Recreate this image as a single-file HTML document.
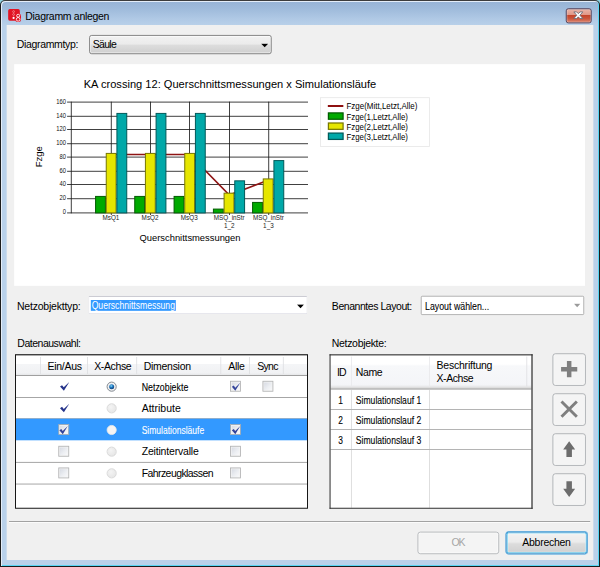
<!DOCTYPE html>
<html lang="de"><head><meta charset="utf-8"><title>Diagramm anlegen</title>
<style>
html,body{margin:0;padding:0;}
body{width:600px;height:567px;overflow:hidden;background:#8fd3e4;position:relative;font-family:"Liberation Sans",sans-serif;}
#win{position:absolute;left:0;top:0;width:600px;height:567px;box-sizing:border-box;border:1px solid #1c1c1c;border-top-color:#3c3c3c;border-radius:5px 5px 0 0;
 background:linear-gradient(to bottom,#97b3d5 0px,#9fbbdb 8px,#b0c9e5 18px,#b9d1ea 25px,#b9d1ea 100%);
 box-shadow:inset 1px 1px 0 #e4edf8, inset -1px -1px 0 #58d6f4;}
#c{position:absolute;left:0;top:0;width:720px;height:680px;transform:scale(0.833333);transform-origin:0 0;}
#c div,#c svg{position:absolute;box-sizing:border-box;}
.t{white-space:nowrap;}
#content{left:8px;top:30px;width:704px;height:642px;background:#f0f0f0;}
.cb{width:13px;height:13px;border:1px solid #b0b1b2;background:linear-gradient(135deg,#d3d7e0 0%,#eceef2 55%,#fbfbfc 100%);box-shadow:inset 0 0 0 1px #f4f4f4;}
.rb{width:12px;height:12px;border-radius:50%;border:1px solid #6c747c;background:radial-gradient(circle at 50% 50%,#fff 0%,#dfe3e6 100%);box-shadow:inset 0 0 0 1px #f2f2f2;}
.rb.dis{border-color:#d2d2d2;background:radial-gradient(circle at 40% 35%,#f4f4f4 0%,#e2e2e2 100%);box-shadow:none;}
.btn{border:1px solid #a3a7ab;border-radius:3.5px;background:#f4f4f4;box-shadow:inset 0 0 0 1px #fafafa;}
</style></head><body>
<div id="win"></div>
<div id="c">
<svg style="left:9px;top:9.5px" width="18" height="18" viewBox="0 0 18 18"><rect x="0.8" y="0.8" width="14" height="14" rx="2" fill="#e11424"/><circle cx="7.3" cy="3.9" r="1.1" fill="none" stroke="#f7b0b4" stroke-width="0.7"/><circle cx="7.3" cy="7.4" r="1.1" fill="none" stroke="#f7b0b4" stroke-width="0.7"/><circle cx="7.3" cy="11.5" r="1.3" fill="#fff"/><rect x="9.4" y="6.2" width="6.8" height="10.2" rx="3" fill="#e11424"/><circle cx="12.8" cy="8.9" r="1.8" fill="none" stroke="#fff" stroke-width="1"/><circle cx="12.8" cy="13.2" r="2.2" fill="none" stroke="#fff" stroke-width="1"/></svg>
<div class="t" style="left:30.40px;top:11.70px;font-size:12.6px;line-height:16px;color:#000;letter-spacing:-0.372px;">Diagramm anlegen</div>
<div style="left:679px;top:10px;width:31px;height:17.8px;border:1px solid #4a2f44;border-radius:3px;background:linear-gradient(to bottom,#ebb6aa 0%,#e09685 44%,#c4452b 47%,#cb573d 72%,#dc8a76 100%);box-shadow:inset 0 0 0 1px rgba(255,255,255,.3);"></div>
<svg style="left:687.2px;top:13.4px" width="14" height="10.6" viewBox="0 0 14 12" preserveAspectRatio="none"><path d="M1.6 1.5 L5.0 1.5 L7 3.8 L9 1.5 L12.4 1.5 L8.9 6 L12.4 10.5 L9 10.5 L7 8.2 L5 10.5 L1.6 10.5 L5.1 6 Z" fill="#fff" stroke="#666c78" stroke-width="1.1" stroke-linejoin="round"/></svg>
<div id="content"></div>
<div class="t" style="left:20.00px;top:46.20px;font-size:12.6px;line-height:16px;color:#000;letter-spacing:-0.385px;">Diagrammtyp:</div>
<div style="left:107px;top:42.2px;width:219px;height:22.8px;border:1px solid #707070;border-radius:3px;background:linear-gradient(to bottom,#f2f2f2 0%,#ebebeb 48%,#dddddd 52%,#cfcfcf 100%);box-shadow:inset 0 0 0 1px rgba(255,255,255,.75);"></div>
<div class="t" style="left:111.40px;top:46.40px;font-size:12.6px;line-height:16px;color:#000;letter-spacing:-0.885px;">Säule</div>
<svg style="left:313.4px;top:51.6px" width="10" height="6" viewBox="0 0 10 6"><path d="M0.4 0.4 L8.8 0.4 L4.6 4.8 Z" fill="#000"/></svg>
<div style="left:16.8px;top:76.8px;width:685.2px;height:265.8px;background:#fff;"></div>
<svg style="left:0;top:0" width="720" height="680" viewBox="0 0 720 680" font-family="Liberation Sans, sans-serif">
<rect x="80.5" y="122" width="289.1" height="1" fill="#1a1a1a"/>
<rect x="80.5" y="139" width="289.1" height="1" fill="#1a1a1a"/>
<rect x="80.5" y="155" width="289.1" height="1" fill="#1a1a1a"/>
<rect x="80.5" y="172" width="289.1" height="1" fill="#1a1a1a"/>
<rect x="80.5" y="188" width="289.1" height="1" fill="#1a1a1a"/>
<rect x="80.5" y="205" width="289.1" height="1" fill="#1a1a1a"/>
<rect x="80.5" y="221" width="289.1" height="1" fill="#1a1a1a"/>
<rect x="80.5" y="238" width="289.1" height="1" fill="#1a1a1a"/>
<rect x="80.5" y="255" width="289.1" height="1" fill="#1a1a1a"/>
<rect x="85" y="122" width="1" height="134" fill="#1a1a1a"/>
<rect x="133" y="122" width="1" height="136" fill="#1a1a1a"/>
<rect x="180" y="122" width="1" height="136" fill="#1a1a1a"/>
<rect x="227" y="122" width="1" height="136" fill="#1a1a1a"/>
<rect x="275" y="122" width="1" height="136" fill="#1a1a1a"/>
<rect x="322" y="122" width="1" height="136" fill="#1a1a1a"/>
<polyline points="133.5,185.4 180.5,185.4 227.5,185.4 275.2,234.1 322.5,216.0" fill="none" stroke="#8e1414" stroke-width="2"/>
<rect x="114.70" y="235.70" width="11.80" height="19.80" fill="#00aa00" stroke="#005c00" stroke-width="1.2"/>
<rect x="127.50" y="184.10" width="11.80" height="71.40" fill="#e6e600" stroke="#787800" stroke-width="1.2"/>
<rect x="140.30" y="136.10" width="11.80" height="119.40" fill="#00a8a8" stroke="#005a5a" stroke-width="1.2"/>
<rect x="161.70" y="235.70" width="11.80" height="19.80" fill="#00aa00" stroke="#005c00" stroke-width="1.2"/>
<rect x="174.50" y="184.10" width="11.80" height="71.40" fill="#e6e600" stroke="#787800" stroke-width="1.2"/>
<rect x="187.30" y="136.10" width="11.80" height="119.40" fill="#00a8a8" stroke="#005a5a" stroke-width="1.2"/>
<rect x="208.90" y="235.70" width="11.80" height="19.80" fill="#00aa00" stroke="#005c00" stroke-width="1.2"/>
<rect x="221.70" y="184.10" width="11.80" height="71.40" fill="#e6e600" stroke="#787800" stroke-width="1.2"/>
<rect x="234.50" y="136.10" width="11.80" height="119.40" fill="#00a8a8" stroke="#005a5a" stroke-width="1.2"/>
<rect x="256.10" y="250.90" width="11.80" height="4.60" fill="#00aa00" stroke="#005c00" stroke-width="1.2"/>
<rect x="268.90" y="231.80" width="11.80" height="23.70" fill="#e6e600" stroke="#787800" stroke-width="1.2"/>
<rect x="281.70" y="217.00" width="11.80" height="38.50" fill="#00a8a8" stroke="#005a5a" stroke-width="1.2"/>
<rect x="303.10" y="242.90" width="11.80" height="12.60" fill="#00aa00" stroke="#005c00" stroke-width="1.2"/>
<rect x="315.90" y="214.70" width="11.80" height="40.80" fill="#e6e600" stroke="#787800" stroke-width="1.2"/>
<rect x="328.70" y="192.70" width="11.80" height="62.80" fill="#00a8a8" stroke="#005a5a" stroke-width="1.2"/>
<text x="79.2" y="124.4" font-size="8" text-anchor="end" fill="#111" textLength="11.61" lengthAdjust="spacingAndGlyphs">160</text>
<text x="79.2" y="141.4" font-size="8" text-anchor="end" fill="#111" textLength="11.61" lengthAdjust="spacingAndGlyphs">140</text>
<text x="79.2" y="157.4" font-size="8" text-anchor="end" fill="#111" textLength="11.61" lengthAdjust="spacingAndGlyphs">120</text>
<text x="79.2" y="174.4" font-size="8" text-anchor="end" fill="#111" textLength="11.61" lengthAdjust="spacingAndGlyphs">100</text>
<text x="79.2" y="190.4" font-size="8" text-anchor="end" fill="#111" textLength="7.74" lengthAdjust="spacingAndGlyphs">80</text>
<text x="79.2" y="207.4" font-size="8" text-anchor="end" fill="#111" textLength="7.74" lengthAdjust="spacingAndGlyphs">60</text>
<text x="79.2" y="223.4" font-size="8" text-anchor="end" fill="#111" textLength="7.74" lengthAdjust="spacingAndGlyphs">40</text>
<text x="79.2" y="240.4" font-size="8" text-anchor="end" fill="#111" textLength="7.74" lengthAdjust="spacingAndGlyphs">20</text>
<text x="79.2" y="257.4" font-size="8" text-anchor="end" fill="#111" textLength="3.87" lengthAdjust="spacingAndGlyphs">0</text>
<text x="133.1" y="264.2" font-size="7.6" text-anchor="middle" fill="#222">MsQ1</text>
<text x="180.1" y="264.2" font-size="7.6" text-anchor="middle" fill="#222">MsQ2</text>
<text x="227.1" y="264.2" font-size="7.6" text-anchor="middle" fill="#222">MsQ3</text>
<text x="275.1" y="264.2" font-size="7.6" text-anchor="middle" fill="#222">MSQ_inStr</text>
<text x="275.1" y="273.8" font-size="7.6" text-anchor="middle" fill="#222">1_2</text>
<text x="322.1" y="264.2" font-size="7.6" text-anchor="middle" fill="#222">MSQ_inStr</text>
<text x="322.1" y="273.8" font-size="7.6" text-anchor="middle" fill="#222">1_3</text>
<text x="167.4" y="289.8" font-size="11.7" fill="#000" textLength="121.2" lengthAdjust="spacingAndGlyphs">Querschnittsmessungen</text>
<text x="-13.2" y="0" font-size="11.4" fill="#000" transform="translate(51.0,187.6) rotate(-90)">Fzge</text>
<text x="100.5" y="105.7" font-size="13.3" fill="#000">KA crossing 12: Querschnittsmessungen x Simulationsläufe</text>
<rect x="384.6" y="117.2" width="130.8" height="58.6" fill="#fff" stroke="#e8e8e8" stroke-width="1"/>
<rect x="393.4" y="126" width="18.6" height="2.4" fill="#8e1010"/>
<rect x="394.1" y="135.5" width="17.6" height="7.6" fill="#00aa00" stroke="#005c00" stroke-width="1.5"/>
<rect x="394.1" y="147.6" width="17.6" height="7.6" fill="#e6e600" stroke="#787800" stroke-width="1.5"/>
<rect x="394.1" y="159.7" width="17.6" height="7.6" fill="#00a8a8" stroke="#005a5a" stroke-width="1.5"/>
<text x="415.8" y="131.40" font-size="10.8" fill="#000" textLength="85" lengthAdjust="spacingAndGlyphs">Fzge(Mitt,Letzt,Alle)</text>
<text x="415.8" y="143.45" font-size="10.8" fill="#000" textLength="73.8" lengthAdjust="spacingAndGlyphs">Fzge(1,Letzt,Alle)</text>
<text x="415.8" y="155.50" font-size="10.8" fill="#000" textLength="73.8" lengthAdjust="spacingAndGlyphs">Fzge(2,Letzt,Alle)</text>
<text x="415.8" y="167.55" font-size="10.8" fill="#000" textLength="73.8" lengthAdjust="spacingAndGlyphs">Fzge(3,Letzt,Alle)</text>
</svg>
<div class="t" style="left:20.40px;top:360.00px;font-size:12.6px;line-height:16px;color:#000;letter-spacing:-0.260px;">Netzobjekttyp:</div>
<div style="left:106px;top:355.3px;width:263.2px;height:22px;background:#fff;border:1px solid #e0e0e8;border-top-color:#bdbdc6;border-radius:2px;"></div>
<div style="left:108.6px;top:360.4px;width:102.6px;height:12.4px;background:#3399ff;"></div>
<div class="t" style="left:110.00px;top:358.60px;font-size:12.2px;line-height:16px;color:#fff;transform:scaleX(0.8476);transform-origin:0 0;">Querschnittsmessung</div>
<svg style="left:356.1px;top:364.6px" width="10" height="6" viewBox="0 0 10 6"><path d="M0.4 0.4 L8.8 0.4 L4.6 4.8 Z" fill="#000"/></svg>
<div class="t" style="left:398.20px;top:360.00px;font-size:12.6px;line-height:16px;color:#000;letter-spacing:-0.534px;">Benanntes Layout:</div>
<div style="left:505.4px;top:354.9px;width:195.2px;height:22.8px;background:#fff;border:1px solid #a6a6a6;border-radius:1.5px;"></div>
<div class="t" style="left:509.80px;top:359.50px;font-size:12.6px;line-height:16px;color:#000;transform:scaleX(0.8391);transform-origin:0 0;-webkit-text-stroke:0.1px #000;">Layout wählen...</div>
<svg style="left:688px;top:364.2px" width="10" height="6" viewBox="0 0 10 6"><path d="M0.8 0.6 L8.4 0.6 L4.6 4.6 Z" fill="#9a9a9a"/></svg>
<div class="t" style="left:20.80px;top:403.90px;font-size:12.6px;line-height:16px;color:#000;letter-spacing:-0.581px;">Datenauswahl:</div>
<div class="t" style="left:398.20px;top:403.90px;font-size:12.6px;line-height:16px;color:#000;letter-spacing:-0.387px;">Netzobjekte:</div>
<svg style="left:0;top:0" width="720" height="680" viewBox="0 0 600 566.6667"><rect x="15.5" y="354.7" width="292" height="153.55" fill="#fff" stroke="#161616" stroke-width="1"/><defs><linearGradient id="hg" x1="0" y1="0" x2="0" y2="1"><stop offset="0" stop-color="#fff"/><stop offset="0.42" stop-color="#fff"/><stop offset="0.47" stop-color="#f4f5f7"/><stop offset="0.9" stop-color="#f1f2f4"/><stop offset="1" stop-color="#e6e7e9"/></linearGradient><linearGradient id="hg2" x1="0" y1="0" x2="0" y2="1"><stop offset="0" stop-color="#fff"/><stop offset="0.28" stop-color="#fff"/><stop offset="0.34" stop-color="#f7f8fa"/><stop offset="0.92" stop-color="#f4f5f8"/><stop offset="1" stop-color="#e8e9eb"/></linearGradient></defs><rect x="16" y="355.2" width="291" height="19.8" fill="url(#hg)"/><rect x="16" y="355.200" width="291.000" height="0.8" fill="#9a9a9a"/><rect x="16" y="375.000" width="291.000" height="1.0" fill="#a0a0a0"/><rect x="40.175" y="357" width="0.85" height="17.000" fill="#dfe0e2"/><rect x="87.075" y="357" width="0.85" height="17.000" fill="#dfe0e2"/><rect x="136.275" y="357" width="0.85" height="17.000" fill="#dfe0e2"/><rect x="220.375" y="357" width="0.85" height="17.000" fill="#dfe0e2"/><rect x="249.075" y="357" width="0.85" height="17.000" fill="#dfe0e2"/><rect x="282.875" y="357" width="0.85" height="17.000" fill="#dfe0e2"/><rect x="16" y="397.000" width="291.000" height="1.0" fill="#a6a6a6"/><rect x="16" y="418.100" width="291.000" height="0.8" fill="#a6a6a6"/><rect x="16" y="418.7" width="291" height="21.6" fill="#3399ff"/><rect x="16" y="461.900" width="291.000" height="1.0" fill="#a6a6a6"/><rect x="16" y="483.550" width="291.000" height="1.0" fill="#a6a6a6"/></svg>
<div class="t" style="left:57.00px;top:431.90px;font-size:12.6px;line-height:16px;color:#000;letter-spacing:-0.346px;">Ein/Aus</div>
<div class="t" style="left:113.10px;top:431.90px;font-size:12.6px;line-height:16px;color:#000;letter-spacing:-0.460px;">X-Achse</div>
<div class="t" style="left:172.50px;top:431.90px;font-size:12.6px;line-height:16px;color:#000;letter-spacing:-0.347px;">Dimension</div>
<div class="t" style="left:273.90px;top:431.90px;font-size:12.6px;line-height:16px;color:#000;letter-spacing:-0.353px;">Alle</div>
<div class="t" style="left:308.60px;top:431.90px;font-size:12.6px;line-height:16px;color:#000;letter-spacing:-0.803px;">Sync</div>
<svg style="left:70.6px;top:457.29999999999995px" width="13.4" height="13.4" viewBox="0 0 12 12"><path d="M0.9 6.1 L3.1 4.7 L4.9 7.0 L10.9 1.3 L5.1 10.6 Z" fill="#26348b"/></svg>
<div class="rb" style="left:128px;top:457.9px;"></div><div style="left:131px;top:460.9px;width:6px;height:6px;border-radius:50%;background:radial-gradient(circle at 42% 36%,#8fdcf8 0%,#1f7cc4 34%,#0f4482 70%,#16243c 100%);"></div>
<div class="t" style="left:169.60px;top:456.70px;font-size:12.6px;line-height:16px;color:#000;transform:scaleX(0.8416);transform-origin:0 0;-webkit-text-stroke:0.12px #000;">Netzobjekte</div>
<div class="cb" style="left:276.1px;top:457.4px"></div><svg style="left:276.6px;top:457.5px" width="12.4" height="12.4" viewBox="0 0 9 9"><path d="M0.9 4.5 L2.6 3.4 L3.8 5.2 L8.2 0.9 L3.9 8.0 Z" fill="#33439a"/></svg>
<div class="cb" style="left:314.5px;top:457.4px"></div>
<svg style="left:70.6px;top:483.4px" width="13.4" height="13.4" viewBox="0 0 12 12"><path d="M0.9 6.1 L3.1 4.7 L4.9 7.0 L10.9 1.3 L5.1 10.6 Z" fill="#26348b"/></svg>
<div class="rb dis" style="left:128px;top:484.0px;"></div>
<div class="t" style="left:170.00px;top:482.60px;font-size:12.6px;line-height:16px;color:#000;letter-spacing:0.008px;">Attribute</div>
<div class="cb" style="left:69.8px;top:509.4px"></div><svg style="left:70.3px;top:509.5px" width="12.4" height="12.4" viewBox="0 0 9 9"><path d="M0.9 4.5 L2.6 3.4 L3.8 5.2 L8.2 0.9 L3.9 8.0 Z" fill="#33439a"/></svg>
<div class="rb dis" style="left:128px;top:509.9px;background:#f4f4f4;border-color:#e8e8e8;"></div>
<div class="t" style="left:169.60px;top:508.70px;font-size:12.6px;line-height:16px;color:#fff;transform:scaleX(0.8112);transform-origin:0 0;-webkit-text-stroke:0.12px #fff;">Simulationsläufe</div>
<div class="cb" style="left:276.1px;top:509.4px"></div><svg style="left:276.6px;top:509.5px" width="12.4" height="12.4" viewBox="0 0 9 9"><path d="M0.9 4.5 L2.6 3.4 L3.8 5.2 L8.2 0.9 L3.9 8.0 Z" fill="#33439a"/></svg>
<div class="cb" style="left:69.8px;top:535.4px"></div>
<div class="rb dis" style="left:128px;top:535.9px;"></div>
<div class="t" style="left:170.00px;top:534.40px;font-size:12.6px;line-height:16px;color:#000;letter-spacing:-0.216px;">Zeitintervalle</div>
<div class="cb" style="left:276.1px;top:535.4px"></div>
<div class="cb" style="left:69.8px;top:561.4px"></div>
<div class="rb dis" style="left:128px;top:561.9px;"></div>
<div class="t" style="left:170.00px;top:560.40px;font-size:12.6px;line-height:16px;color:#000;letter-spacing:-0.690px;">Fahrzeugklassen</div>
<div class="cb" style="left:276.1px;top:561.4px"></div>
<svg style="left:0;top:0" width="720" height="680" viewBox="0 0 600 566.6667"><rect x="330.05" y="354.85" width="201.95" height="153.4" fill="#fff"/><rect x="330.5" y="355.3" width="201" height="31.6" fill="url(#hg2)"/><rect x="330.5" y="386.750" width="201.000" height="1.0" fill="#dadada"/><rect x="330.5" y="387.850" width="201.000" height="2.0" fill="#bfbfbf"/><rect x="350.975" y="356.5" width="0.85" height="30.000" fill="#e9e9ec"/><rect x="350.975" y="390" width="0.85" height="117.800" fill="#d9d9d9"/><rect x="429.075" y="356.5" width="0.85" height="30.000" fill="#e9e9ec"/><rect x="429.075" y="390" width="0.85" height="117.800" fill="#d9d9d9"/><rect x="526.375" y="356.5" width="0.85" height="30.000" fill="#e0e0e2"/><rect x="330.5" y="409.000" width="201.000" height="1.0" fill="#b4b4b4"/><rect x="330.5" y="429.000" width="201.000" height="1.0" fill="#b4b4b4"/><rect x="330.5" y="449.000" width="201.000" height="1.0" fill="#b4b4b4"/><rect x="329.550" y="354.3" width="1.0" height="154.450" fill="#2a2a2a"/><rect x="531.350" y="354.3" width="1.3" height="154.450" fill="#3a3a3a"/><rect x="329.55" y="354.300" width="203.100" height="1.1" fill="#2e2e2e"/><rect x="329.55" y="507.750" width="203.100" height="1.0" fill="#2e2e2e"/></svg>
<div class="t" style="left:404.40px;top:438.60px;font-size:12.6px;line-height:16px;color:#000;letter-spacing:-1.050px;">ID</div>
<div class="t" style="left:426.80px;top:438.60px;font-size:12.6px;line-height:16px;color:#000;letter-spacing:-0.403px;">Name</div>
<div class="t" style="left:523.90px;top:430.60px;font-size:12.6px;line-height:16px;color:#000;letter-spacing:-0.270px;">Beschriftung</div>
<div class="t" style="left:523.90px;top:446.20px;font-size:12.6px;line-height:16px;color:#000;letter-spacing:-0.546px;">X-Achse</div>
<div class="t" style="left:406.40px;top:472.60px;font-size:12.6px;line-height:16px;color:#000;transform:scaleX(0.8000);transform-origin:0 0;-webkit-text-stroke:0.12px #000;">1</div>
<div class="t" style="left:426.80px;top:472.60px;font-size:12.6px;line-height:16px;color:#000;transform:scaleX(0.8181);transform-origin:0 0;-webkit-text-stroke:0.12px #000;">Simulationslauf 1</div>
<div class="t" style="left:406.40px;top:496.70px;font-size:12.6px;line-height:16px;color:#000;transform:scaleX(0.8000);transform-origin:0 0;-webkit-text-stroke:0.12px #000;">2</div>
<div class="t" style="left:426.80px;top:496.70px;font-size:12.6px;line-height:16px;color:#000;transform:scaleX(0.8181);transform-origin:0 0;-webkit-text-stroke:0.12px #000;">Simulationslauf 2</div>
<div class="t" style="left:406.40px;top:520.80px;font-size:12.6px;line-height:16px;color:#000;transform:scaleX(0.8000);transform-origin:0 0;-webkit-text-stroke:0.12px #000;">3</div>
<div class="t" style="left:426.80px;top:520.80px;font-size:12.6px;line-height:16px;color:#000;transform:scaleX(0.8181);transform-origin:0 0;-webkit-text-stroke:0.12px #000;">Simulationslauf 3</div>
<div class="btn" style="left:662.6px;top:423.5px;width:40.4px;height:39.6px;"></div>
<div class="btn" style="left:662.6px;top:471.5px;width:40.4px;height:39.6px;"></div>
<div class="btn" style="left:662.6px;top:519.5px;width:40.4px;height:39.6px;"></div>
<div class="btn" style="left:662.6px;top:567.5px;width:40.4px;height:39.6px;"></div>
<svg style="left:671px;top:431.4px" width="24" height="24" viewBox="0 0 24 24"><path d="M9.3 2.3 h5.4 v7 h7 v5.4 h-7 v7 h-5.4 v-7 h-7 v-5.4 h7 Z" fill="#7f7f7f"/></svg>
<svg style="left:671px;top:479.4px" width="24" height="24" viewBox="0 0 24 24"><path d="M2.8 2.8 L21.2 21.2 M21.2 2.8 L2.8 21.2" stroke="#7f7f7f" stroke-width="3.5" fill="none"/></svg>
<svg style="left:671px;top:527.4px" width="24" height="24" viewBox="0 0 24 24"><path d="M12 2.5 L19.2 12.5 L15.3 12.5 L15.3 21.5 L8.7 21.5 L8.7 12.5 L4.8 12.5 Z" fill="#6d6d6d"/></svg>
<svg style="left:671px;top:575.4px" width="24" height="24" viewBox="0 0 24 24"><path d="M12 21.5 L19.2 11.5 L15.3 11.5 L15.3 2.5 L8.7 2.5 L8.7 11.5 L4.8 11.5 Z" fill="#6d6d6d"/></svg>
<svg style="left:0;top:0" width="720" height="680" viewBox="0 0 600 566.6667"><rect x="9" y="521.000" width="581.200" height="1.0" fill="#a2a2a2"/><rect x="9" y="522.000" width="581.200" height="1.0" fill="#fbfbfb"/></svg>
<div style="left:500.5px;top:637.5px;width:98.2px;height:27.8px;border:1px solid #aeb2b6;border-radius:3.5px;background:#f4f4f4;box-shadow:inset 0 0 0 1px #fcfcfc;"></div>
<div class="t" style="left:541.80px;top:643.30px;font-size:12.6px;line-height:16px;color:#a6a6a6;letter-spacing:-1.302px;">OK</div>
<div style="left:606.8px;top:637.5px;width:98.2px;height:27.8px;border:1px solid #2c8ccf;border-radius:3.5px;background:linear-gradient(to bottom,#f2f2f2 0%,#ebebeb 48%,#dddddd 52%,#cfcfcf 100%);box-shadow:inset 0 0 0 1px #38c2f2, inset 0 0 0 2px rgba(255,255,255,.45), 0 0 0 0.4px #3aa0dc;"></div>
<div class="t" style="left:626.80px;top:643.30px;font-size:12.6px;line-height:16px;color:#000;letter-spacing:-0.327px;">Abbrechen</div>
</div>
</body></html>
